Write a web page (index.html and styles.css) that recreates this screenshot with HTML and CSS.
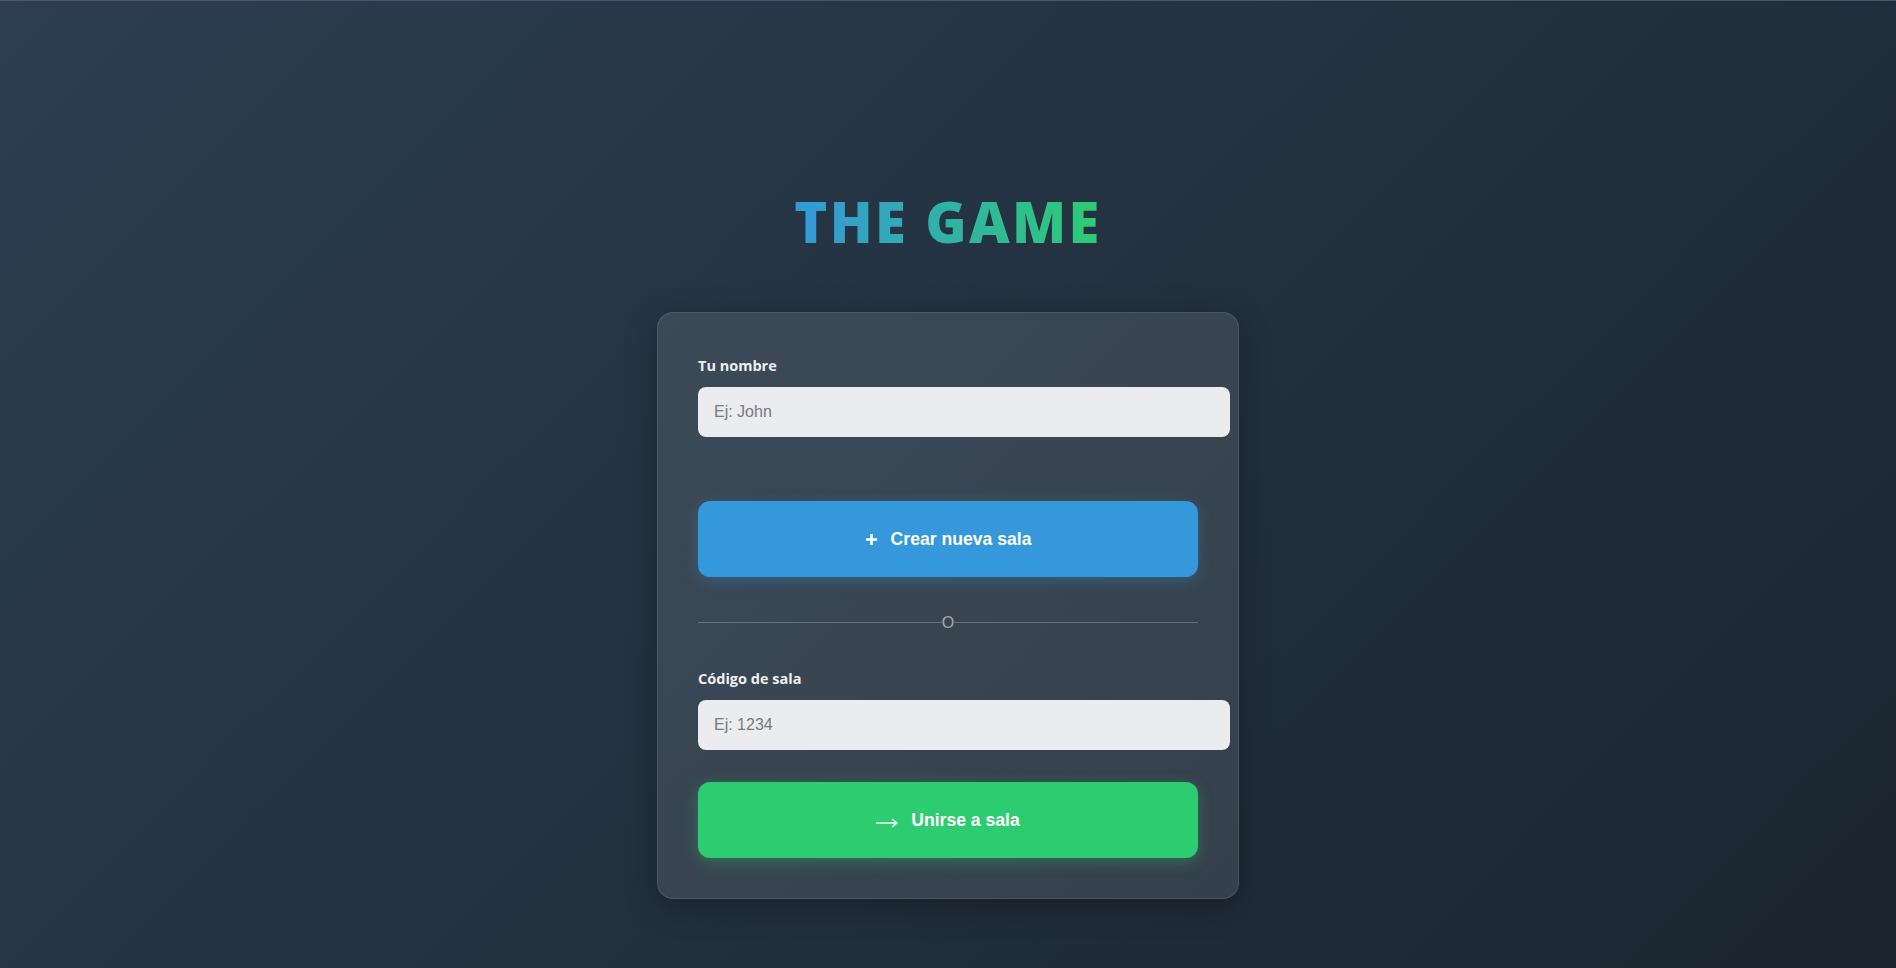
FILE: index.html
```html
<!DOCTYPE html>
<html lang="es">
<head>
<meta charset="utf-8">
<title>THE GAME</title>
<link rel="stylesheet" href="styles.css">
</head>
<body>
<main class="page">
  <h1 class="title">THE GAME</h1>
  <section class="card">
    <div class="field">
      <label class="label" for="name">Tu nombre</label>
      <input class="input" id="name" type="text" placeholder="Ej: John">
    </div>
    <button class="btn btn-create" type="button">
      <svg class="icon-plus" width="13" height="13" viewBox="0 0 13 13" aria-hidden="true"><path d="M6.5 1V12M1 6.5H12" stroke="#fff" stroke-width="2.6" fill="none"/></svg>
      <span>Crear nueva sala</span>
    </button>
    <div class="divider"><span class="divider-text">O</span></div>
    <div class="field field-code">
      <label class="label" for="code">Código de sala</label>
      <input class="input" id="code" type="text" placeholder="Ej: 1234">
    </div>
    <button class="btn btn-join" type="button">
      <svg class="icon-arrow" width="22" height="12" viewBox="0 0 22 12" aria-hidden="true"><path d="M0.5 7H21M16.5 3.5L21 7L16.5 10.5" stroke="#fff" stroke-width="1.3" fill="none" stroke-linecap="round" stroke-linejoin="round"/></svg>
      <span>Unirse a sala</span>
    </button>
  </section>
</main>
</body>
</html>
```
FILE: styles.css
```css
* {
  box-sizing: border-box;
}

html, body {
  margin: 0;
  padding: 0;
}

body {
  min-height: 100vh;
  border-top: 1px solid #4f555b;
  background: linear-gradient(135deg, #2c3e50 0%, #1a252f 100%);
  font-family: "Open Sans", "Liberation Sans", sans-serif;
  color: #ecf0f1;
}

.page {
  display: flex;
  flex-direction: column;
  align-items: center;
  padding-top: 187px;
}

.title {
  margin: 0 0 57px;
  font-family: "Open Sans", sans-serif;
  font-weight: 800;
  font-size: 56px;
  line-height: 67px;
  letter-spacing: 2.4px;
  background: linear-gradient(90deg, #3498db 0%, #2ecc71 100%);
  -webkit-background-clip: text;
  background-clip: text;
  color: transparent;
}

.card {
  width: 582px;
  padding: 42px 40px 40px;
  background: rgba(255, 255, 255, 0.1);
  border: 1px solid rgba(255, 255, 255, 0.1);
  border-radius: 16px;
  box-shadow: 0 8px 32px rgba(0, 0, 0, 0.3);
}

.field {
  margin-bottom: 64px;
}

.field-code {
  margin-bottom: 32px;
}

.label {
  display: block;
  margin-bottom: 10px;
  font-family: "Open Sans", sans-serif;
  font-weight: 700;
  font-size: 14.5px;
  line-height: 22px;
  color: #ecf0f1;
}

.input {
  display: block;
  box-sizing: content-box;
  width: 100%;
  height: 50px;
  padding: 0 16px;
  border: none;
  border-radius: 8px;
  background: #ebecee;
  font-family: "Liberation Sans", Arial, sans-serif;
  font-size: 16px;
  color: #2c3e50;
  outline: none;
}

.input::placeholder {
  color: #7a7a7a;
}

.btn {
  display: flex;
  align-items: center;
  justify-content: center;
  gap: 13px;
  width: 100%;
  height: 76px;
  border: none;
  border-radius: 12px;
  font-family: "Liberation Sans", Arial, sans-serif;
  font-weight: 700;
  font-size: 17.6px;
  color: #fff;
  cursor: pointer;
}

.btn-create {
  background: #3498db;
  box-shadow: 0 4px 15px rgba(52, 152, 219, 0.3);
}

.btn-join {
  background: #2ecc71;
  box-shadow: 0 4px 15px rgba(46, 204, 113, 0.3);
}

.icon-plus {
  display: block;
  flex: none;
}

.icon-arrow {
  display: block;
  flex: none;
  margin-top: 3px;
}

.divider {
  display: flex;
  align-items: center;
  height: 20px;
  margin: 35px 0 36px;
}

.divider::before,
.divider::after {
  content: "";
  flex: 1;
  height: 1px;
  background: rgba(255, 255, 255, 0.24);
}

.divider-text {
  font-family: "Liberation Sans", Arial, sans-serif;
  font-size: 16px;
  line-height: 20px;
  padding-top: 1px;
  color: rgba(255, 255, 255, 0.55);
}
```
